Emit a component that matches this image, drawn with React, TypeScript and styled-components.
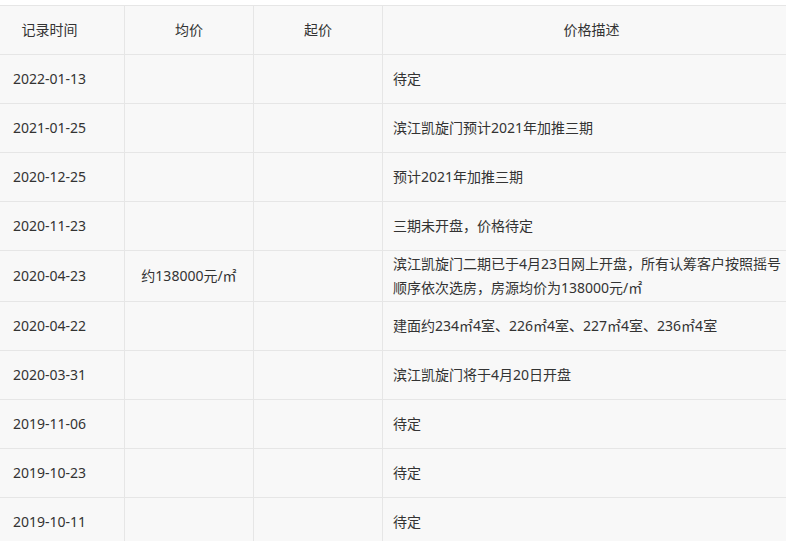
import React from 'react';
import styled, { createGlobalStyle } from 'styled-components';

const GlobalStyle = createGlobalStyle`
  html, body {
    margin: 0;
    padding: 0;
    background: #ffffff;
    overflow: hidden;
  }
  body {
    font-family: "Noto Sans", "Noto Sans CJK SC", sans-serif;
    color: #333333;
  }
`;

// the table is wider than the window and sits a little off its left edge
const Wrap = styled.div`
  padding-top: 5px;
  margin-left: -26px;
  width: 826px;
`;

const Table = styled.table`
  width: 826px;
  border-collapse: collapse;
  table-layout: fixed;
  background: #f8f8f8;
  font-size: 14px;
  line-height: 24px;
`;

const Th = styled.th<{ $w: number }>`
  width: ${(p) => p.$w}px;
  height: 49px;
  padding: 0 10px;
  box-sizing: border-box;
  font-weight: normal;
  text-align: center;
  border: 1px solid #e6e6e6;
`;

const Td = styled.td<{ $left?: boolean }>`
  height: 49px;
  padding: 1px 10px;
  box-sizing: border-box;
  text-align: ${(p) => (p.$left ? 'left' : 'center')};
  vertical-align: middle;
  border: 1px solid #e6e6e6;
`;

type Row = { date: string; avg?: string; start?: string; desc: string };

const rows: Row[] = [
  { date: '2022-01-13', desc: '待定' },
  { date: '2021-01-25', desc: '滨江凯旋门预计2021年加推三期' },
  { date: '2020-12-25', desc: '预计2021年加推三期' },
  { date: '2020-11-23', desc: '三期未开盘，价格待定' },
  {
    date: '2020-04-23',
    avg: '约138000元/㎡',
    desc: '滨江凯旋门二期已于4月23日网上开盘，所有认筹客户按照摇号顺序依次选房，房源均价为138000元/㎡',
  },
  { date: '2020-04-22', desc: '建面约234㎡4室、226㎡4室、227㎡4室、236㎡4室' },
  { date: '2020-03-31', desc: '滨江凯旋门将于4月20日开盘' },
  { date: '2019-11-06', desc: '待定' },
  { date: '2019-10-23', desc: '待定' },
  { date: '2019-10-11', desc: '待定' },
];

export default function App() {
  return (
    <>
      <GlobalStyle />
      <Wrap>
        <Table>
          <thead>
            <tr>
              <Th $w={150}>记录时间</Th>
              <Th $w={129}>均价</Th>
              <Th $w={129}>起价</Th>
              <Th $w={418}>价格描述</Th>
            </tr>
          </thead>
          <tbody>
            {rows.map((r) => (
              <tr key={r.date}>
                <Td>{r.date}</Td>
                <Td>{r.avg}</Td>
                <Td>{r.start}</Td>
                <Td $left>{r.desc}</Td>
              </tr>
            ))}
          </tbody>
        </Table>
      </Wrap>
    </>
  );
}
